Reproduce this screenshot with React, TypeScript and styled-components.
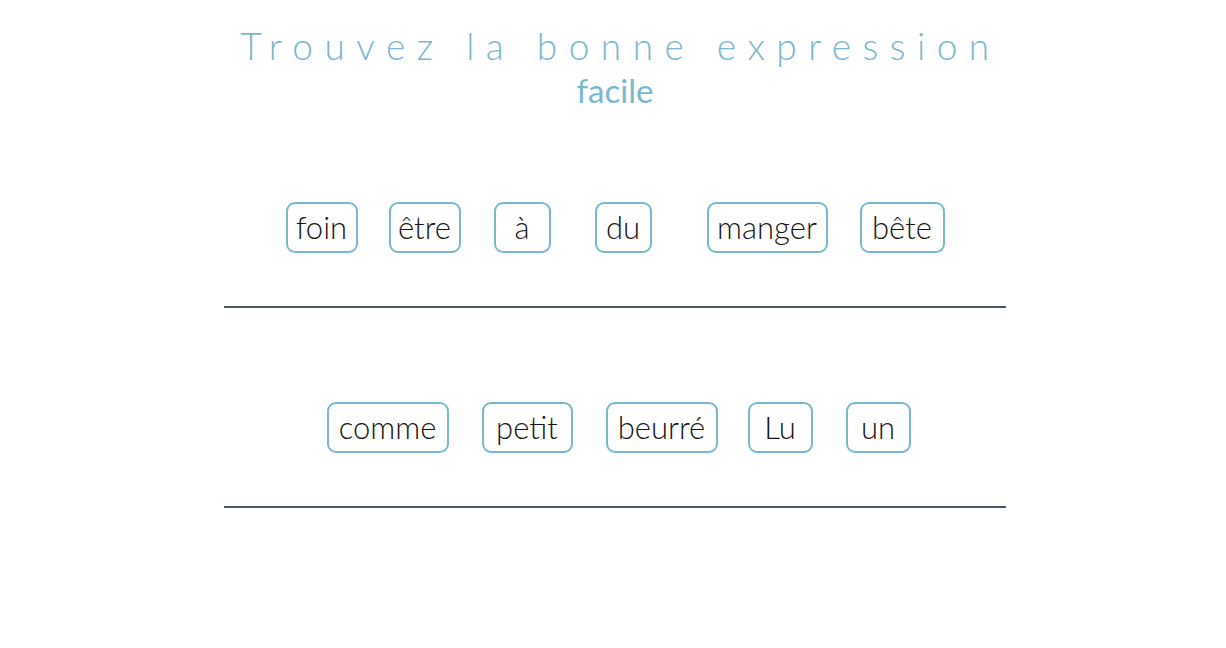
import styled, { createGlobalStyle } from 'styled-components'

const GlobalStyle = createGlobalStyle`
  html, body {
    margin: 0;
    padding: 0;
    background: #ffffff;
  }
  body {
    font-family: 'Lato', 'Open Sans', sans-serif;
  }
`

const Page = styled.main`
  width: 782px;
  margin-left: calc(50% - 389px);
  padding-top: 22px;
`

const Header = styled.header`
  display: flex;
  flex-direction: column;
  align-items: center;
  color: #7ab8d1;
`

const Title = styled.h1`
  margin: 0;
  padding-left: 11px;
  font-size: 37px;
  font-weight: 300;
  letter-spacing: 11.5px;
  line-height: 48px;
  white-space: nowrap;
`

const Level = styled.h2`
  margin: 0;
  font-size: 33px;
  font-weight: 400;
  line-height: 40px;
`

const Line = styled.section<{ $offset: number }>`
  display: flex;
  justify-content: center;
  padding: 94px 0 53px ${(p) => p.$offset}px;
  border-bottom: 2px solid #4b5866;

  &:first-of-type {
    padding-top: 92px;
  }
`

const Chip = styled.button<{ $w: number; $gap: number }>`
  box-sizing: border-box;
  width: ${(p) => p.$w}px;
  height: 51px;
  margin-left: ${(p) => p.$gap}px;
  padding: 0 0 2px;
  display: flex;
  align-items: center;
  justify-content: center;
  background: #ffffff;
  border: 2px solid #7ab8d1;
  border-radius: 9px;
  font-family: inherit;
  font-size: 31px;
  font-weight: 300;
  color: #161616;
  cursor: pointer;
`

type Word = { text: string; w: number; gap: number }

const rows: { offset: number; words: Word[] }[] = [
  {
    offset: 0,
    words: [
      { text: 'foin', w: 72, gap: 0 },
      { text: 'être', w: 72, gap: 31 },
      { text: 'à', w: 57, gap: 33 },
      { text: 'du', w: 57, gap: 44 },
      { text: 'manger', w: 121, gap: 55 },
      { text: 'bête', w: 85, gap: 32 },
    ],
  },
  {
    offset: 7,
    words: [
      { text: 'comme', w: 122, gap: 0 },
      { text: 'petit', w: 91, gap: 33 },
      { text: 'beurré', w: 112, gap: 33 },
      { text: 'Lu', w: 65, gap: 30 },
      { text: 'un', w: 65, gap: 33 },
    ],
  },
]

function App() {
  return (
    <>
      <GlobalStyle />
      <Page>
        <Header>
          <Title>Trouvez la bonne expression</Title>
          <Level>facile</Level>
        </Header>
        {rows.map((row, i) => (
          <Line key={i} $offset={row.offset}>
            {row.words.map((word) => (
              <Chip key={word.text} $w={word.w} $gap={word.gap}>
                {word.text}
              </Chip>
            ))}
          </Line>
        ))}
      </Page>
    </>
  )
}

export default App
